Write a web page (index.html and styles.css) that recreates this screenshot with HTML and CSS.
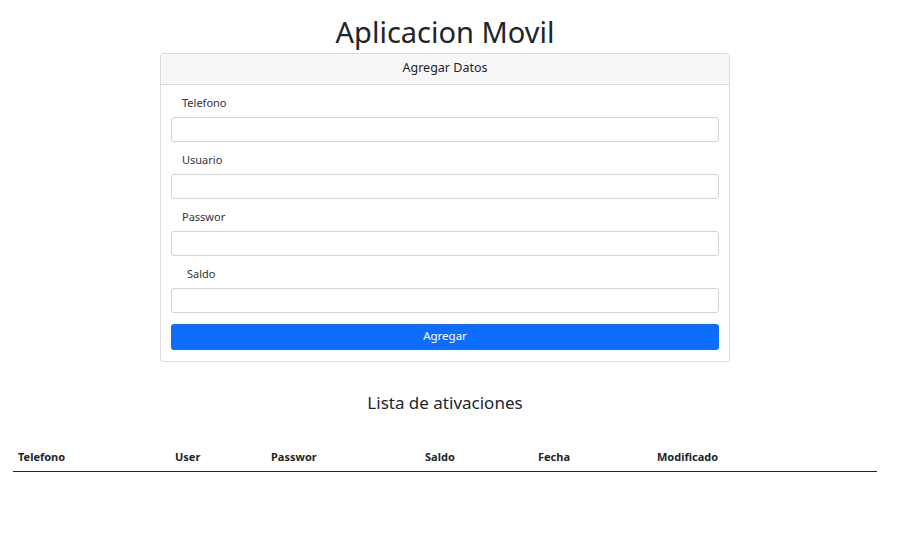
FILE: index.html
```html
<!DOCTYPE html>
<html lang="es">
<head>
<meta charset="utf-8">
<title>Aplicacion Movil</title>
<link rel="stylesheet" href="styles.css">
</head>
<body>
<h1 class="title">Aplicacion Movil</h1>
<div class="card">
  <div class="card-header">Agregar Datos</div>
  <form class="card-body">
    <label class="lbl">Telefono</label>
    <input class="field" type="text">
    <label class="lbl">Usuario</label>
    <input class="field" type="text">
    <label class="lbl">Passwor</label>
    <input class="field" type="text">
    <label class="lbl lbl-indent">Saldo</label>
    <input class="field" type="text">
    <button class="btn" type="button">Agregar</button>
  </form>
</div>
<h2 class="subtitle">Lista de ativaciones</h2>
<table class="tbl">
  <thead>
    <tr>
      <th class="c1">Telefono</th>
      <th class="c2">User</th>
      <th class="c3">Passwor</th>
      <th class="c4">Saldo</th>
      <th class="c5">Fecha</th>
      <th class="c6">Modificado</th>
    </tr>
  </thead>
  <tbody></tbody>
</table>
</body>
</html>
```
FILE: styles.css
```css
* { box-sizing: border-box; }
body {
  margin: 0;
  padding-right: 7px;
  font-family: "Noto Sans", "Open Sans", sans-serif;
  color: #212529;
  background: #fff;
}
.title {
  margin: 14px 0 0;
  text-align: center;
  font-weight: 400;
  font-size: 29px;
  line-height: 36px;
}
.card {
  width: 570px;
  margin: 3px auto 0;
  border: 1px solid #dcdcdc;
  border-radius: 3px;
}
.card-header {
  height: 31px;
  background: #f7f7f7;
  border-bottom: 1px solid #dcdcdc;
  text-align: center;
  font-size: 12.5px;
  line-height: 27px;
}
.card-body {
  display: flex;
  flex-direction: column;
  padding: 10px 10px 11px;
}
.lbl {
  font-size: 11px;
  line-height: 16px;
  padding-left: 11px;
  margin-bottom: 6px;
  color: #333;
}
.lbl-indent { padding-left: 16px; }
.field {
  height: 25px;
  border: 1px solid #ced4da;
  border-radius: 3px;
  margin: 0 0 10px;
  font: inherit;
}
.btn {
  height: 26px;
  margin-top: 1px;
  padding: 0 0 3px;
  border: 0;
  border-radius: 3px;
  background: #0d6efd;
  color: #fff;
  font-family: inherit;
  font-size: 11.5px;
}
.subtitle {
  margin: 30px 0 0;
  text-align: center;
  font-weight: 400;
  font-size: 17px;
  line-height: 22px;
}
.tbl {
  width: 864px;
  margin: 35px 0 0 13px;
  border-collapse: collapse;
}
.tbl th {
  text-align: left;
  font-size: 11px;
  font-weight: 700;
  padding: 0 5px 6px;
  line-height: 16px;
  border-bottom: 1px solid #212529;
}
.c1 { width: 157px; }
.c2 { width: 96px; }
.c3 { width: 154px; }
.c4 { width: 113px; }
.c5 { width: 119px; }
.c6 { width: 225px; }
```
